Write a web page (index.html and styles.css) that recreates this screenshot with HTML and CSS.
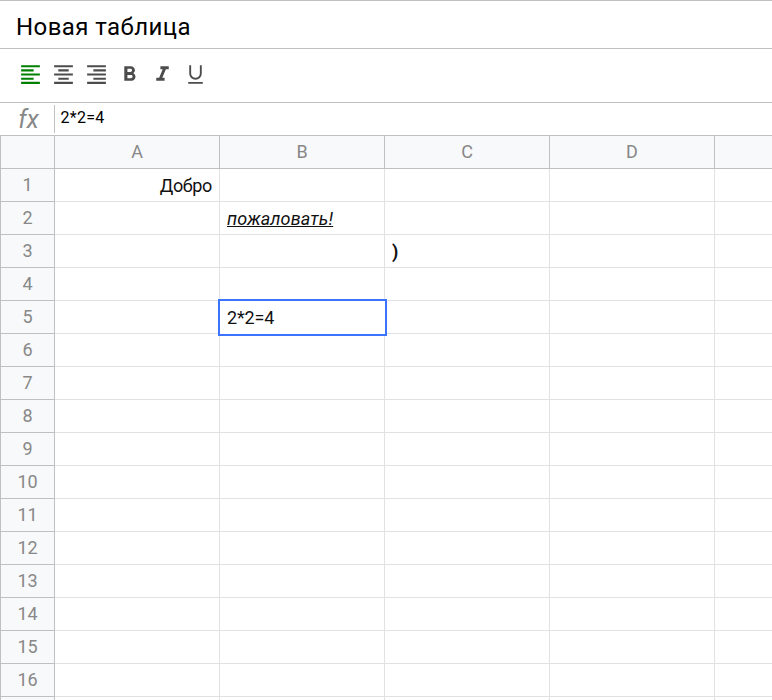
FILE: index.html
```html
<!DOCTYPE html>
<html lang="ru">
<head>
<meta charset="utf-8">
<title>Новая таблица</title>
<link rel="stylesheet" href="styles.css">
</head>
<body>
<div class="excel">
  <header class="header"><span class="title">Новая таблица</span></header>
  <div class="toolbar">
    <div class="button active"><svg viewBox="0 0 24 24"><path d="M15 15H3v2h12v-2zm0-8H3v2h12V7zM3 13h18v-2H3v2zm0 8h18v-2H3v2zM3 3v2h18V3H3z"/></svg></div>
    <div class="button"><svg viewBox="0 0 24 24"><path d="M7 15v2h10v-2H7zm-4 6h18v-2H3v2zm0-8h18v-2H3v2zm4-6v2h10V7H7zM3 3v2h18V3H3z"/></svg></div>
    <div class="button"><svg viewBox="0 0 24 24"><path d="M3 21h18v-2H3v2zm6-4h12v-2H9v2zm-6-4h18v-2H3v2zm6-4h12V7H9v2zM3 3v2h18V3H3z"/></svg></div>
    <div class="button"><svg viewBox="0 0 24 24"><path d="M15.6 10.79c.97-.67 1.65-1.77 1.65-2.79 0-2.26-1.75-4-4-4H7v14h7.04c2.09 0 3.71-1.7 3.71-3.79 0-1.52-.86-2.82-2.15-3.42zM10 6.5h3c.83 0 1.5.67 1.5 1.5s-.67 1.5-1.5 1.5h-3v-3zm3.5 9H10v-3h3.5c.83 0 1.5.67 1.5 1.5s-.67 1.5-1.5 1.5z"/></svg></div>
    <div class="button"><svg viewBox="0 0 24 24"><path d="M10 4v3h2.21l-3.42 8H6v3h8v-3h-2.21l3.42-8H18V4z"/></svg></div>
    <div class="button"><svg class="underline" viewBox="0 0 24 24"><path d="M6.900 3v8a5.100 5.100 0 0 0 10.200 0V3M5 20h14"/></svg></div>
  </div>
  <div class="formula">
    <div class="info">fx</div>
    <div class="input">2*2=4</div>
  </div>
  <div class="table" id="table"></div>
</div>
<script src="table.js"></script>
</body>
</html>
```
FILE: styles.css
```css
* { box-sizing: border-box; }
body {
  margin: 0;
  overflow: hidden;
  font-family: Roboto, "Liberation Sans", sans-serif;
  color: #000;
  background: #fff;
}
.excel {
  height: 700px;
  overflow: hidden;
  border-top: 1px solid #c0c0c0;
}
.header {
  height: 48px;
  padding: 0 16px;
  border-bottom: 1px solid #c0c0c0;
}
.title {
  display: block;
  font-size: 24px;
  line-height: 52px;
  letter-spacing: 0.42px;
}
.toolbar {
  display: flex;
  height: 54px;
  padding: 13px 14px 0;
  border-bottom: 1px solid #c0c0c0;
}
.button {
  width: 33px;
  height: 25px;
  padding: 0 4px;
  color: #4c4c4c;
}
.button.active { color: green; }
.button svg {
  display: block;
  width: 25px;
  height: 25px;
  fill: currentColor;
}
.button .underline {
  fill: none;
  stroke: currentColor;
  stroke-width: 1.8;
}
.formula {
  display: flex;
  height: 32px;
  padding: 2px 0;
}
.info {
  width: 55px;
  height: 28px;
  border-right: 1px solid #c0c0c0;
  color: #888;
  font-size: 25px;
  font-style: italic;
  line-height: 30px;
  padding-left: 3px;
  text-align: center;
}
.input {
  padding-left: 5.5px;
  font-size: 16px;
  line-height: 26px;
  letter-spacing: 0.25px;
}
.table { width: max-content; }
.row {
  display: flex;
  height: 33px;
}
.row-head { height: 34px; }
.row-info, .column {
  color: #888;
  background: #f8f9fa;
  border-right: 1px solid #c0c0c0;
  border-bottom: 1px solid #c0c0c0;
  font-size: 18px;
  line-height: 32px;
  text-align: center;
}
.row-info {
  width: 55px;
  border-left: 1px solid #c0c0c0;
}
.column { width: 165px; }
.row-head > * { border-top: 1px solid #c0c0c0; }
.cell {
  width: 165px;
  padding: 0 7px;
  border-right: 1px solid #e2e2e3;
  border-bottom: 1px solid #e2e2e3;
  color: #111;
  font-size: 18px;
  line-height: 34px;
  white-space: nowrap;
}
.right {
  text-align: right;
  letter-spacing: -0.35px;
}
.accent {
  font-style: italic;
  text-decoration: underline;
  letter-spacing: 0.15px;
}
.bold { font-weight: bold; }
.selected {
  position: relative;
  outline: 2px solid #3c74ff;
  border-color: transparent;
  letter-spacing: -0.15px;
}
```
FILE: table.js
```js
const columns = ['A', 'B', 'C', 'D', ''];
const cells = {
  A1: ['Добро', 'right'],
  B2: ['пожаловать!', 'accent'],
  C3: [')', 'bold'],
  B5: ['2*2=4', 'selected']
};

const head = '<div class="row row-head"><div class="row-info"></div>' +
  columns.map(c => `<div class="column">${c}</div>`).join('') + '</div>';

let rows = '';
for (let n = 1; n <= 17; n++) {
  rows += `<div class="row"><div class="row-info">${n <= 16 ? n : ''}</div>` +
    columns.map(c => {
      const [text, style] = cells[c + n] || ['', ''];
      return `<div class="cell ${style}">${text}</div>`;
    }).join('') + '</div>';
}
document.getElementById('table').innerHTML = head + rows;
```
